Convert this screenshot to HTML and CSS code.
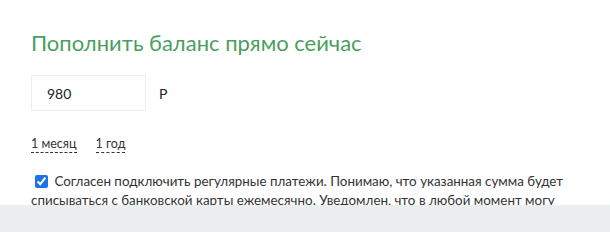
FILE: index.html
```html
<!DOCTYPE html>
<html lang="ru">
<head>
  <meta charset="UTF-8" />
  <meta name="viewport" content="width=device-width, initial-scale=1.0" />
  <title>Пополнить баланс</title>
  <link rel="stylesheet" href="styles.css">
</head>
<body>

  <div class="page">
    <div class="pay-form">
      <h2 class="pay-title">Пополнить баланс прямо сейчас</h2>

      <div class="amount-row">
        <input class="amount-input" type="text" value="980">
        <span class="currency">Р</span>
      </div>

      <div class="period-links">
        <a class="period" href="#">1 месяц</a>
        <a class="period" href="#">1 год</a>
      </div>

      <p class="agree">
        <input class="agree-check" type="checkbox" checked>
        Согласен подключить регулярные платежи. Понимаю, что указанная сумма будет списываться с банковской карты ежемесячно. Уведомлен, что в любой момент могу отключить регулярные платежи в личном кабинете.
      </p>
    </div>
  </div>

  <div class="footer-bar"></div>

</body>
</html>
```

FILE: styles.css
```css
* {
  box-sizing: border-box;
  margin: 0;
  padding: 0;
}
html, body {
  height: 100%;
  font-family: Lato, "Noto Sans", sans-serif;
  background: #fff;
  color: #333;
  overflow: hidden;
}

.page {
  height: 205px;
  overflow: hidden;
  padding: 29px 31px 0;
}
.pay-form {
  width: 540px;
}
.pay-title {
  font-size: 22px;
  font-weight: normal;
  color: #4a9f5e;
  line-height: 28px;
  margin-bottom: 18px;
}
.amount-row {
  display: flex;
  align-items: center;
  margin-bottom: 24px;
}
.amount-input {
  width: 115px;
  height: 36px;
  border: 1px solid #eeeeee;
  padding: 0 15px;
  font-family: inherit;
  font-size: 14px;
  color: #222;
  outline: none;
}
.currency {
  margin-left: 13px;
  font-size: 14px;
  color: #222;
}
.period-links {
  display: flex;
  gap: 19px;
  margin-bottom: 19px;
}
.period {
  font-size: 12.5px;
  color: #333;
  text-decoration: none;
  border-bottom: 1px dashed #333;
  line-height: 17px;
}
.agree {
  font-size: 13.4px;
  line-height: 19px;
  color: #333;
}
.agree-check {
  width: 13px;
  height: 13px;
  margin: 0 3px 0 4px;
  vertical-align: -2px;
  accent-color: #1a73e8;
}

.footer-bar {
  height: 27px;
  background: #ebeeef;
}
```
